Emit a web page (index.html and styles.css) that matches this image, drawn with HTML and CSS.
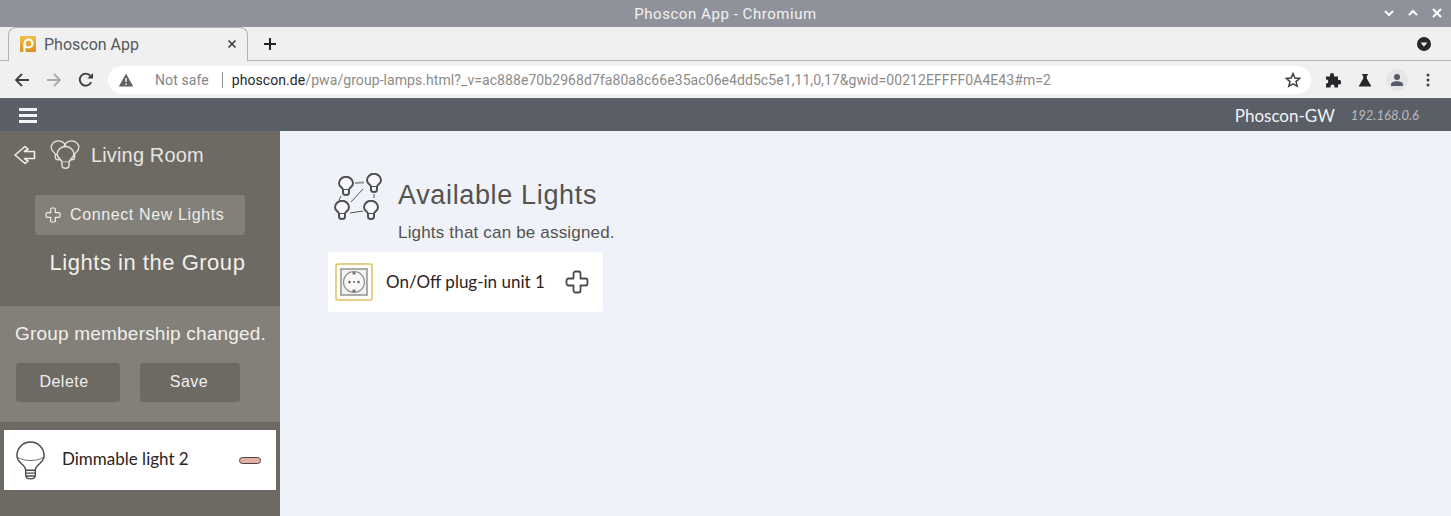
FILE: index.html
```html
<!DOCTYPE html>
<html lang="en">

<head>
    <meta charset="UTF-8">
    <title>Phoscon App - Chromium</title>
    <link rel="stylesheet" href="styles.css">
</head>

<body>
    <svg class="defs" width="0" height="0">
        <defs>
            <linearGradient id="favgrad" x1="0" y1="0" x2="0" y2="1">
                <stop offset="0" stop-color="#f0c04a" />
                <stop offset="1" stop-color="#d98c1f" />
            </linearGradient>
        </defs>
        <symbol id="bulb" viewBox="0 0 32 40">
            <path d="M11 30 C11 24 2 23 2 15 A14 14 0 0 1 30 15 C30 23 21 24 21 30 Z" stroke="currentColor" stroke-width="1.5" stroke-linejoin="round" />
            <path d="M3 17 C10 21 22 21 29 17" fill="none" stroke="currentColor" stroke-width="0.8" />
            <path d="M11 30 V35 C11 38 13 39 16 39 C19 39 21 38 21 35 V30 M11 33 H21 M11.5 36 H20.5" fill="none" stroke="currentColor" stroke-width="1.4" stroke-linecap="round" />
        </symbol>
        <symbol id="bulb-bold" viewBox="0 0 32 40">
            <path d="M10 28 C10 23 2 22 2 14.5 A14 13 0 0 1 30 14.5 C30 22 22 23 22 28 Z" stroke="currentColor" stroke-linejoin="round" />
            <path d="M10 28 V33 C10 37 13 38 16 38 C19 38 22 37 22 33 V28" stroke="currentColor" />
        </symbol>
        <symbol id="plus" viewBox="0 0 24 24">
            <path d="M8.5 3.5 A2 2 0 0 1 10.5 1.5 H13.5 A2 2 0 0 1 15.5 3.5 V8.5 H20.5 A2 2 0 0 1 22.5 10.5 V13.5 A2 2 0 0 1 20.5 15.5 H15.5 V20.5 A2 2 0 0 1 13.5 22.5 H10.5 A2 2 0 0 1 8.5 20.5 V15.5 H3.5 A2 2 0 0 1 1.5 13.5 V10.5 A2 2 0 0 1 3.5 8.5 H8.5 Z" fill="none" stroke="currentColor" stroke-width="1.8" stroke-linejoin="round" />
        </symbol>
    </svg>

    <div class="titlebar">
        <span class="titlebar-text">Phoscon App - Chromium</span>
        <div class="window-btns">
            <svg width="12" height="12" viewBox="0 0 12 12"><path d="M2 4 L6 8 L10 4" fill="none" stroke="#fff" stroke-width="2" /></svg>
            <svg width="12" height="12" viewBox="0 0 12 12"><path d="M2 8 L6 4 L10 8" fill="none" stroke="#fff" stroke-width="2" /></svg>
            <svg width="12" height="12" viewBox="0 0 12 12"><path d="M2 2 L10 10 M10 2 L2 10" fill="none" stroke="#fff" stroke-width="2" /></svg>
        </div>
    </div>

    <div class="tabstrip">
        <div class="tab">
            <svg class="favicon" width="16" height="16" viewBox="0 0 16 16">
                <rect width="16" height="16" rx="1" fill="url(#favgrad)" />
                <circle cx="8.5" cy="7.5" r="4" fill="none" stroke="#fff" stroke-width="2.2" />
                <path d="M4.5 7.5 V16" stroke="#fff" stroke-width="2.2" />
            </svg>
            <span class="tab-title">Phoscon App</span>
            <svg class="tab-close" width="10" height="10" viewBox="0 0 10 10"><path d="M1.5 1.5 L8.5 8.5 M8.5 1.5 L1.5 8.5" stroke="#3c4043" stroke-width="1.7" /></svg>
        </div>
        <svg class="new-tab" width="14" height="14" viewBox="0 0 14 14"><path d="M7 1 V13 M1 7 H13" stroke="#222" stroke-width="2" /></svg>
        <svg class="tab-search" width="14" height="14" viewBox="0 0 14 14">
            <circle cx="7" cy="7" r="7" fill="#26272b" />
            <path d="M3.6 5.4 H10.4 L7 9.8 Z" fill="#f1f0f0" />
        </svg>
    </div>

    <div class="toolbar">
        <svg class="nav-icon" width="16" height="16" viewBox="0 0 16 16"><path d="M15 8 H2 M8 2 L2 8 L8 14" fill="none" stroke="#3c4043" stroke-width="1.8" /></svg>
        <svg class="nav-icon" width="16" height="16" viewBox="0 0 16 16"><path d="M1 8 H14 M8 2 L14 8 L8 14" fill="none" stroke="#a9a9a9" stroke-width="1.8" /></svg>
        <svg class="nav-icon" width="16" height="16" viewBox="0 0 16 16"><path d="M13.2 10.2 A6 6 0 1 1 12.4 3.8" fill="none" stroke="#3c4043" stroke-width="1.9" /><path d="M9.4 6.6 H15 V1 Z" fill="#3c4043" /></svg>
        <div class="omnibox">
            <svg class="warn" width="16" height="14" viewBox="0 0 16 14">
                <path d="M8 0.5 L15.2 13.5 H0.8 Z" fill="#5f6368" />
                <path d="M8 5 V9 M8 10.4 V12" stroke="#fff" stroke-width="1.4" />
            </svg>
            <span class="not-safe">Not safe</span>
            <span class="url"><span class="url-host">phoscon.de</span>/pwa/group-lamps.html?_v=ac888e70b2968d7fa80a8c66e35ac06e4dd5c5e1,11,0,17&amp;gwid=00212EFFFF0A4E43#m=2</span>
            <svg class="star" width="16" height="16" viewBox="0 0 16 16"><path d="M8 1.6 L9.9 6 L14.7 6.4 L11 9.6 L12.2 14.3 L8 11.8 L3.8 14.3 L5 9.6 L1.3 6.4 L6.1 6 Z" fill="none" stroke="#3c4043" stroke-width="1.5" /></svg>
        </div>
        <div class="toolbar-actions">
            <svg width="16" height="16" viewBox="0 0 16 16"><path d="M1 4.5 H5 V3 A2 2 0 0 1 9 3 V4.5 H13 V8 H14 A2.2 2.2 0 0 1 14 12.5 H13 V15.5 H9.5 V14.5 A2 2 0 0 0 5.5 14.5 V15.5 H1 V11.5 H2 A2.2 2.2 0 0 0 2 7.5 H1 Z" fill="#26272b" /></svg>
            <svg width="14" height="14" viewBox="0 0 14 14"><path d="M4.2 1 H9.8 V2.4 H8.8 V5.4 L13.4 13.4 H0.6 L5.2 5.4 V2.4 H4.2 Z" fill="#26272b" /></svg>
            <div class="avatar">
                <svg width="14" height="14" viewBox="0 0 14 14"><circle cx="7" cy="4" r="3" fill="#565a6b" /><path d="M1 13 V11.4 C1 9.4 4 8.3 7 8.3 C10 8.3 13 9.4 13 11.4 V13 Z" fill="#565a6b" /></svg>
            </div>
            <svg width="4" height="14" viewBox="0 0 4 14"><circle cx="2" cy="2" r="1.5" fill="#3c4043" /><circle cx="2" cy="7" r="1.5" fill="#3c4043" /><circle cx="2" cy="12" r="1.5" fill="#3c4043" /></svg>
        </div>
    </div>

    <header class="app-header">
        <div class="hamburger"><span></span><span></span><span></span></div>
        <span class="gw-name">Phoscon-GW</span>
        <span class="gw-ip">192.168.0.6</span>
    </header>

    <div class="app">
        <aside class="sidebar">
            <div class="side-top">
                <div class="room-row">
                    <svg class="back" width="22" height="20" viewBox="0 0 22 20"><path d="M1 10 L11 1.5 L14 4 L10.5 6.5 H20.5 V13.5 H10.5 L14 16 L11 18.5 Z" fill="none" stroke="#f1efeb" stroke-width="1.6" stroke-linejoin="round" /></svg>
                    <svg class="room-icon" width="30" height="30" viewBox="0 0 30 30">
                        <use href="#bulb-bold" x="0" y="0" width="17" height="21" fill="none" />
                        <use href="#bulb-bold" x="13" y="0" width="17" height="21" fill="none" />
                        <use href="#bulb-bold" x="6" y="5" width="19" height="25" fill="#6d6963" />
                    </svg>
                    <span class="room-name">Living Room</span>
                </div>
                <button class="connect-btn">
                    <svg class="connect-plus" width="16" height="16"><use href="#plus" /></svg>
                    Connect New Lights
                </button>
                <h2 class="side-heading">Lights in the Group</h2>
            </div>
            <div class="change-box">
                <p class="change-msg">Group membership changed.</p>
                <div class="change-btns">
                    <button class="dark-btn delete-btn">Delete</button>
                    <button class="dark-btn save-btn">Save</button>
                </div>
            </div>
            <div class="light-card group-light">
                <svg class="light-bulb" width="31" height="39"><use href="#bulb" fill="none" /></svg>
                <span class="light-name">Dimmable light 2</span>
                <span class="minus"></span>
            </div>
        </aside>

        <main class="content">
            <div class="avail-head">
                <svg class="avail-icon" width="52" height="50" viewBox="0 0 52 50">
                    <path d="M21 10 L30 9.5" stroke="#999" stroke-width="2" />
                    <path d="M7 23 L5 27 M17 29 L29 16 M40 21 V25 M16 40 L29 38" stroke="#555" stroke-width="1" />
                    <use href="#bulb-bold" x="4" y="3" width="16" height="20" fill="#f7f8fb" />
                    <use href="#bulb-bold" x="32" y="0" width="16" height="20" fill="#f7f8fb" />
                    <use href="#bulb-bold" x="0" y="27" width="16" height="20" fill="#f7f8fb" />
                    <use href="#bulb-bold" x="29" y="27" width="16" height="20" fill="#f7f8fb" />
                </svg>
                <div>
                    <h1 class="avail-title">Available Lights</h1>
                    <p class="avail-sub">Lights that can be assigned.</p>
                </div>
            </div>
            <div class="light-card plug-card">
                <svg class="plug-icon" width="38" height="38" viewBox="0 0 38 38">
                    <rect x="1" y="1" width="36" height="36" rx="2" fill="#fdfcf8" stroke="#dfc061" stroke-width="1.5" />
                    <rect x="6" y="6" width="26" height="26" fill="#f2f2f2" stroke="#989896" stroke-width="1.6" />
                    <circle cx="19" cy="19" r="10.5" fill="#f8f8f8" stroke="#8a8a8a" stroke-width="1.1" />
                    <circle cx="14.5" cy="19" r="1.2" fill="#555" />
                    <circle cx="23.5" cy="19" r="1.2" fill="#555" />
                    <circle cx="19" cy="19" r="1.1" fill="#777" />
                    <rect x="17.5" y="9" width="3" height="2.5" fill="#777" />
                    <rect x="17.5" y="26.5" width="3" height="2.5" fill="#777" />
                </svg>
                <span class="light-name">On/Off plug-in unit 1</span>
                <svg class="plug-plus" width="24" height="24"><use href="#plus" /></svg>
            </div>
        </main>
    </div>
</body>

</html>
```

FILE: styles.css
```css
* {
    box-sizing: border-box;
}

html,
body {
    height: 100%;
}

body {
    margin: 0;
    display: flex;
    flex-direction: column;
    overflow: hidden;
    font-family: "Liberation Sans", Arial, sans-serif;
}

.defs {
    position: absolute;
}

/* browser chrome */
.titlebar {
    flex: none;
    height: 27px;
    display: flex;
    align-items: center;
    justify-content: center;
    position: relative;
    background: #8f929b;
}

.titlebar-text {
    font: 15px Roboto, sans-serif;
    color: #f2f2f2;
    letter-spacing: 0.55px;
}

.window-btns {
    position: absolute;
    right: 8px;
    top: 7px;
    display: flex;
    gap: 12px;
}

.tabstrip {
    flex: none;
    height: 34px;
    display: flex;
    align-items: center;
    background: #f1f0f0;
    border-bottom: 1px solid #b5b3b0;
}

.tab {
    width: 240px;
    height: 34px;
    margin-left: 8px;
    padding: 0 10px 0 11px;
    display: flex;
    align-items: center;
    background: #f1f0f0;
    border: 1px solid #b5b3b0;
    border-bottom: none;
    border-radius: 8px 8px 0 0;
}

.favicon {
    flex: none;
    margin-right: 8px;
}

.tab-title {
    flex: 1;
    font: 16px Roboto, sans-serif;
    color: #55585c;
}

.new-tab {
    margin-left: 15px;
}

.tab-search {
    margin-left: auto;
    margin-right: 20px;
}

.toolbar {
    flex: none;
    height: 37px;
    display: flex;
    align-items: center;
    padding-left: 14px;
    background: #f1f0f0;
}

.nav-icon {
    flex: none;
    margin-right: 16px;
}

.omnibox {
    width: 1203px;
    height: 28px;
    margin-left: -2px;
    padding: 0 10px 0 10px;
    display: flex;
    align-items: center;
    background: #fff;
    border-radius: 14px;
    font: 14px Roboto, sans-serif;
    white-space: nowrap;
}

.warn {
    flex: none;
}

.not-safe {
    margin-left: 21px;
    padding-right: 13px;
    color: #80868b;
    border-right: 1px solid #8f8f8f;
    line-height: 16px;
    letter-spacing: 0.1px;
}

.url {
    flex: 1;
    margin-left: 9px;
    color: #8d8a87;
    letter-spacing: 0.07px;
}

.url-host {
    color: #25272c;
}

.toolbar-actions {
    flex: 1;
    display: flex;
    align-items: center;
    padding-left: 14px;
}

.toolbar-actions svg {
    flex: none;
}

.toolbar-actions>svg:nth-child(2) {
    margin-left: 17px;
}

.avatar {
    width: 22px;
    height: 22px;
    margin-left: 14px;
    display: flex;
    align-items: center;
    justify-content: center;
    background: #e6e6e8;
    border-radius: 50%;
}

.toolbar-actions>svg:last-child {
    margin-left: 18px;
}

/* app */
.app-header {
    flex: none;
    height: 33px;
    display: flex;
    align-items: center;
    padding: 0 32px 0 19px;
    background: #5a5e67;
    border-top: 1px solid #63666e;
}

.hamburger {
    width: 18px;
    display: flex;
    flex-direction: column;
    gap: 3px;
}

.hamburger span {
    height: 3px;
    background: #f4f4f4;
}

.gw-name {
    margin-left: auto;
    font: 17px Lato, sans-serif;
    color: #f2f3f6;
}

.gw-ip {
    margin-left: 16px;
    font: italic 13px Lato, sans-serif;
    color: #b9bbbf;
}

.app {
    flex: 1;
    display: flex;
    min-height: 0;
}

.sidebar {
    width: 280px;
    flex: none;
    background: #6d6963;
    color: #f1efeb;
}

.side-top {
    height: 175px;
}

.room-row {
    height: 48px;
    display: flex;
    align-items: center;
    padding-left: 14px;
}

.room-icon {
    margin-left: 14px;
    color: #e7e5e1;
    stroke-width: 2.4;
}

.room-name {
    margin-left: 11px;
    font-size: 20px;
    letter-spacing: 0.15px;
    color: #e7e5e1;
}

.connect-btn {
    display: flex;
    align-items: center;
    width: 210px;
    height: 40px;
    margin: 16px 0 0 35px;
    padding: 0 0 0 10px;
    border: none;
    border-radius: 3px;
    background: #83807a;
    color: #efedea;
    font: 16px "Liberation Sans", Arial, sans-serif;
    letter-spacing: 0.62px;
}

.connect-plus {
    margin-right: 9px;
}

.side-heading {
    margin: 15px 0 0;
    padding-left: 15px;
    text-align: center;
    font-size: 22px;
    font-weight: normal;
    letter-spacing: 0.52px;
}

.change-box {
    height: 116px;
    padding: 16px 0 0 15px;
    background: #83807a;
}

.change-msg {
    margin: 0;
    font-size: 19px;
    line-height: 23px;
    letter-spacing: 0.2px;
    white-space: nowrap;
}

.change-btns {
    display: flex;
    gap: 20px;
    margin: 18px 0 0 1px;
}

.dark-btn {
    height: 39px;
    padding-bottom: 2px;
    border: none;
    border-radius: 3px;
    background: #6d6963;
    color: #f1efeb;
    font: 16px "Liberation Sans", Arial, sans-serif;
    letter-spacing: 0.5px;
}

.delete-btn {
    width: 104px;
    padding-right: 14px;
}

.save-btn {
    width: 100px;
    padding-right: 8px;
}

.light-card {
    display: flex;
    align-items: center;
    height: 60px;
    background: #fff;
}

.group-light {
    margin: 8px 4px 0;
    padding-left: 11px;
}

.light-bulb {
    color: #4a4a4a;
}

.light-name {
    margin-bottom: 4px;
    font: 17px Lato, sans-serif;
    color: #2c2320;
    white-space: nowrap;
}

.group-light .light-name {
    margin-left: 16px;
}

.minus {
    width: 22px;
    height: 7px;
    margin-left: 50px;
    background: #e5aea6;
    border: 1.5px solid #4a4543;
    border-radius: 4px;
}

.content {
    flex: 1;
    padding: 40px 0 0 48px;
    background: #eff2f8;
}

.avail-head {
    display: flex;
    height: 81px;
}

.avail-icon {
    flex: none;
    margin: 2px 0 0 6px;
    color: #4f4f4f;
    stroke-width: 4;
}

.avail-title {
    margin: 6px 0 0 12px;
    font-size: 27px;
    line-height: 36px;
    font-weight: normal;
    letter-spacing: 0.65px;
    color: #555250;
}

.avail-sub {
    margin: 10px 0 0 12px;
    font-size: 17px;
    line-height: 20px;
    letter-spacing: 0.18px;
    color: #555250;
}

.plug-card {
    width: 275px;
    padding-left: 7px;
    border-radius: 3px;
}

.plug-card .light-name {
    margin-left: 13px;
    margin-bottom: 1px;
}

.plug-plus {
    margin-left: 20px;
    color: #4a4a46;
}
```
